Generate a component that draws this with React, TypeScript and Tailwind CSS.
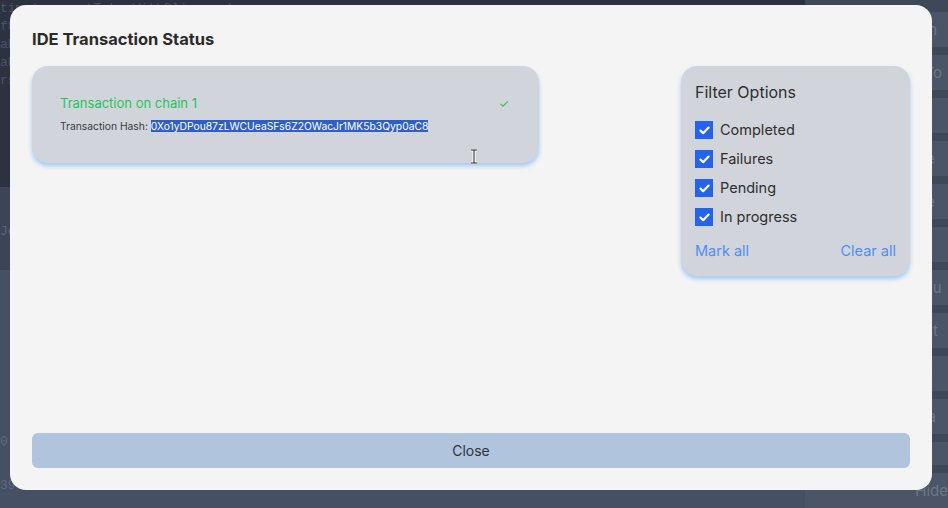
import React from 'react';

const filters = ['Completed', 'Failures', 'Pending', 'In progress'];
const sideItems = ['em', 't To', 'et', 'De', 'De', 's', 'cou', 'ent', 'uy', 'wa', '', 'Hide'];

const Check = () => (
  <span className="flex h-[18px] w-[18px] items-center justify-center bg-[#2563eb]">
    <svg width="11" height="9" viewBox="0 0 11 9" fill="none">
      <path d="M1.5 4.6 4.2 7.2 9.6 1.6" stroke="white" strokeWidth="2.2" strokeLinecap="round" strokeLinejoin="round" />
    </svg>
  </span>
);

const App: React.FC = () => {
  return (
    <div className="relative h-[508px] w-[948px] overflow-hidden bg-[#465064] font-['Inter','Noto_Sans',sans-serif]">
      {/* backdrop: dimmed editor */}
      <div className="flex h-full">
        <div className="flex w-[822px] flex-col">
          <div className="h-[195px] bg-[#2c323f] font-['Liberation_Mono',monospace] text-[13px] leading-[18px] text-[#4a5468]">
            <div>time) amountTokenWithSlippage)</div>
            <div>f8</div>
            <div>ab</div>
            <div>ab</div>
            <div>rs</div>
          </div>
          <div className="h-[85px] bg-[#3c4556] pt-[35px] font-['Liberation_Mono',monospace] text-[13px] text-[#5a6478]">Je</div>
          <div className="flex-1 bg-[#465064] pt-[150px] font-['Liberation_Mono',monospace] text-[13px] leading-[44px] text-[#5f697c]">
            <div>0</div>
            <div>3968ab2ac19be57858cd1f64336e2a9310.sweet-token"</div>
          </div>
        </div>
        <div className="flex flex-1 flex-col gap-[8px] bg-[#3f4858] pt-[12px] text-[15px] text-[#6b7588]">
          {sideItems.map((s, i) => (
            <div key={i} className="h-[35px] bg-[#4b5567] pl-[110px] leading-[35px]">{s}</div>
          ))}
        </div>
      </div>

      {/* modal */}
      <div className="absolute left-[10px] top-[5px] flex h-[485px] w-[922px] flex-col rounded-[16px] bg-[#f4f4f4] px-[22px] pb-[22px] pt-[26px]">
        <h2 className="text-[16.5px] font-bold leading-[16px] text-[#2b2b2b]">IDE Transaction Status</h2>

        <div className="mt-[19px] flex items-start justify-between">
          <div className="relative h-[97px] w-[507px] rounded-[16px] bg-[#d1d5db] px-[28px] pt-[28px] shadow-[0_3px_4px_rgba(96,165,250,0.55)]">
            <div className="flex items-center justify-between">
              <span className="text-[13px] text-[#22c55e]">Transaction on chain 1</span>
              <span className="pr-[2px] text-[12px] text-[#22c55e]">✓</span>
            </div>
            <div className="mt-[5px] text-[10.3px] text-[#3a3a3a]">
              Transaction Hash: <span className="bg-[#2f5fc6] text-white">0Xo1yDPou87zLWCUeaSFs6Z2OWacJr1MK5b3Qyp0aC8</span>
            </div>
            {/* text cursor */}
            <svg className="absolute left-[438px] top-[83px]" width="8" height="15" viewBox="0 0 8 15">
              <path d="M1 1h6M1 14h6M4 1v13" stroke="white" strokeWidth="3" />
              <path d="M1 1h6M1 14h6M4 1v13" stroke="#222" strokeWidth="1" />
            </svg>
          </div>

          <div className="w-[229px] rounded-[16px] bg-[#d1d5db] px-[14px] pb-[14px] pt-[14px] shadow-[0_3px_4px_rgba(96,165,250,0.55)]">
            <div className="text-[16px] text-[#2f2f2f]">Filter Options</div>
            <div className="mt-[17px] flex flex-col gap-[11px]">
              {filters.map((f) => (
                <label key={f} className="flex items-center gap-[7px] text-[14.5px] leading-[18px] text-[#2f2f2f]">
                  <Check />
                  {f}
                </label>
              ))}
            </div>
            <div className="mt-[14px] flex justify-between text-[14.5px] text-[#4f8ef7]">
              <span>Mark all</span>
              <span>Clear all</span>
            </div>
          </div>
        </div>

        <div className="mt-auto">
          <button className="h-[35px] w-full rounded-[6px] bg-[#b0c4de] text-[14px] text-[#333]">Close</button>
        </div>
      </div>
    </div>
  );
};

export default App;
